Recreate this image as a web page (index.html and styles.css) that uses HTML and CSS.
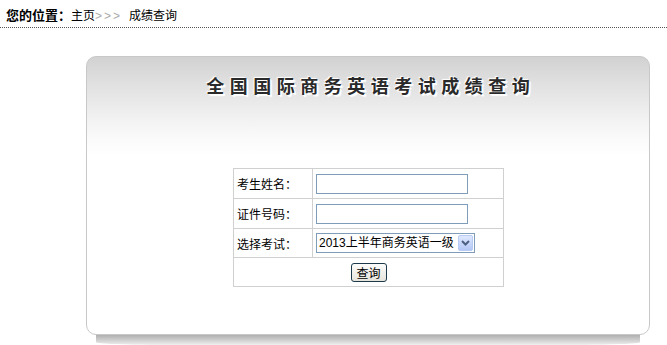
FILE: index.html
```html
<!DOCTYPE html>
<html lang="zh-CN">
<head>
    <meta charset="UTF-8">
    <meta name="viewport" content="width=device-width, initial-scale=1.0">
    <title>成绩查询</title>
    <link rel="stylesheet" href="styles.css">
</head>
<body>
    <div class="crumb">
        <b>您的位置：</b>主页<span class="arrows">&gt;&gt;&gt;</span>成绩查询
    </div>
    <div class="panel">
        <h1 class="title">全国国际商务英语考试成绩查询</h1>
        <form class="query" onsubmit="return false">
        <table class="grid">
            <tr>
                <td class="label">考生姓名：</td>
                <td class="field"><input type="text" name="name" class="textbox"></td>
            </tr>
            <tr>
                <td class="label">证件号码：</td>
                <td class="field"><input type="text" name="idno" class="textbox"></td>
            </tr>
            <tr class="short">
                <td class="label">选择考试：</td>
                <td class="field">
                    <span class="pick">
                        <select name="exam" class="choose">
                            <option>2013上半年商务英语一级</option>
                        </select>
                        <span class="drop">
                            <svg width="9" height="6" viewBox="0 0 9 6"><path d="M1 1 L4.5 4.5 L8 1" fill="none" stroke="#4d6185" stroke-width="2"/></svg>
                        </span>
                    </span>
                </td>
            </tr>
            <tr class="short">
                <td colspan="2" class="submit"><input type="submit" value="查询" class="btn"></td>
            </tr>
        </table>
        </form>
    </div>
    <div class="shade"></div>
</body>
</html>
```

FILE: styles.css
```css
body
{
    margin: 0;
    font-family: "Liberation Sans", "Noto Sans CJK SC", sans-serif;
    font-size: 12px;
    color: #000;
    background: #fff;
}
.crumb
{
    height: 28px;
    line-height: 32px;
    padding-left: 6px;
    border-bottom: 1px dotted #555;
    box-sizing: border-box;
}
.crumb b
{
    font-weight: bold;
    font-size: 13px;
}
.arrows
{
    color: #aaa;
    letter-spacing: 2px;
    margin-right: 7px;
}
.panel
{
    margin: 28px 0 0 86px;
    width: 562px;
    height: 277px;
    border: 1px solid #c8c8c8;
    border-radius: 10px;
    background: linear-gradient(to bottom, #d2d2d2 0, #ececec 50px, #fafafa 80px, #fff 100px);
}
.shade
{
    margin: 0 0 0 96px;
    width: 544px;
    height: 12px;
    background: linear-gradient(to bottom, #b0b0b0, #dcdcdc 60%, #fff);
    border-radius: 0 0 50% 50% / 0 0 40% 40%;
}
.title
{
    margin: 17px 0 0 0;
    height: 26px;
    line-height: 26px;
    text-align: center;
    font-size: 18px;
    font-weight: bold;
    letter-spacing: 5.5px;
    padding-left: 5.5px;
    color: #2a2a2a;
    text-shadow: 1px 1px 0 #fff, 2px 2px 1px #fff, -1px -1px 1px #fff;
}
.query
{
    margin: 0;
}
.grid
{
    margin: 68px 0 0 146px;
    width: 271px;
    border-collapse: collapse;
}
.grid td
{
    border: 1px solid #d0d0d0;
    padding: 0;
    height: 29px;
}
.grid tr.short td
{
    height: 28px;
}
.label
{
    width: 75px;
    padding-left: 3px !important;
}
.field
{
    padding-left: 3px !important;
}
.textbox
{
    width: 152px;
    height: 20px;
    box-sizing: border-box;
    border: 1px solid #7f9db9;
    margin: 0;
    padding: 0 2px;
    font-size: 12px;
    display: block;
}
.pick
{
    position: relative;
    display: block;
    width: 159px;
    height: 20px;
}
.choose
{
    appearance: none;
    -webkit-appearance: none;
    width: 159px;
    height: 20px;
    border: 1px solid #7f9db9;
    background: #fff;
    margin: 0;
    padding: 0 0 0 2px;
    font-family: "Liberation Sans", "Noto Sans CJK SC", sans-serif;
    font-size: 12px;
    color: #000;
    display: block;
}
.drop
{
    position: absolute;
    right: 2px;
    top: 2px;
    width: 15px;
    height: 16px;
    box-sizing: border-box;
    border: 1px solid #b8cbf5;
    border-radius: 2px;
    background: linear-gradient(to bottom, #dfe8fd, #b4c8f6);
    display: flex;
    align-items: center;
    justify-content: center;
    pointer-events: none;
}
.submit
{
    text-align: center;
}
.btn
{
    width: 36px;
    height: 19px;
    padding: 0;
    font-family: "Liberation Sans", "Noto Sans CJK SC", sans-serif;
    font-size: 12px;
    color: #000;
    border: 1px solid #1c3a4a;
    border-radius: 3px;
    background: linear-gradient(to bottom, #fcfcfb, #e6e4dc);
    vertical-align: middle;
}
```
